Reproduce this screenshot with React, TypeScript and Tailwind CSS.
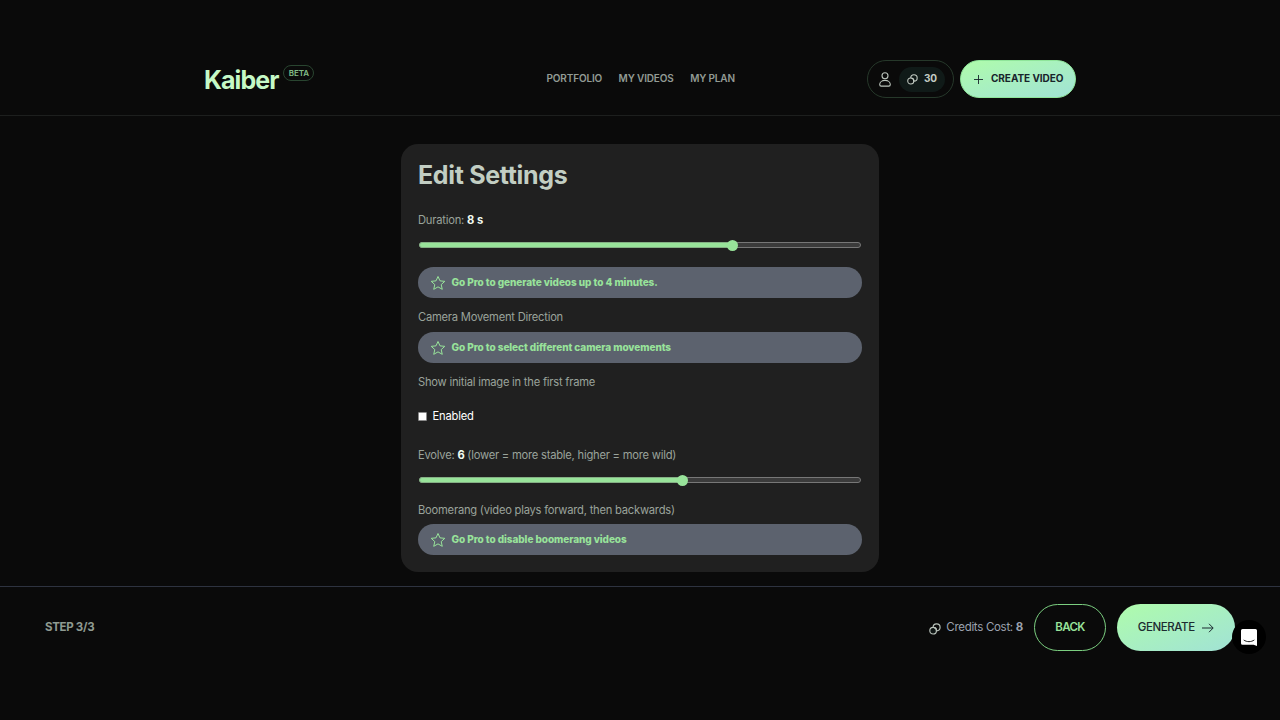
import React from "react";

function CoinsIcon({ className }: { className: string }) {
  return (
    <svg viewBox="0 0 12 12" fill="none" stroke="currentColor" strokeWidth="1.15" className={className}>
      <circle cx="7.6" cy="4.3" r="3.5" />
      <circle cx="4.1" cy="7.7" r="3.3" className="fill-[#0e1413]" />
      <path d="M5 4.6c1.7.2 2.6 1.2 2.4 3" />
    </svg>
  );
}

function Slider({ value }: { value: number }) {
  return (
    <div className="relative mx-px h-[6px] rounded-full border border-[#777] bg-[#3b3b3b]">
      <div className="absolute -top-px -left-px h-[6px] rounded-full border border-[#84b084] bg-[#98e39a]" style={{ width: value }} />
      <div className="absolute -top-[3.5px] size-[11px] rounded-full bg-[#98e39a]" style={{ left: value - 7 }} />
    </div>
  );
}

function ProBanner({ children, className }: { children: React.ReactNode; className: string }) {
  return (
    <div className={"flex h-[31px] items-center rounded-full bg-[#5c626e] pl-[12px] text-[#98e39a] " + className}>
      <svg viewBox="0 0 24 24" fill="none" stroke="currentColor" strokeWidth="1.5" strokeLinejoin="round" className="mt-px mr-[5.5px] size-[16px]">
        <path d="M12 2.2l3 6.6 7.2.7-5.4 4.9 1.6 7.1-6.4-3.7-6.4 3.7 1.6-7.1-5.4-4.9 7.2-.7z" />
      </svg>
      <span className="text-[10px] leading-[15px] font-extrabold tracking-[-0.06px]">{children}</span>
    </div>
  );
}

function Label({ children, className }: { children: React.ReactNode; className: string }) {
  return <div className={"h-[16px] text-[11.2px] leading-[16px] tracking-[-0.23px] whitespace-nowrap text-[#9aa39b] " + className}>{children}</div>;
}

export default function App() {
  return (
    <div className="relative flex h-[720px] w-[1280px] flex-col overflow-hidden bg-[#0a0a0a] font-['Inter',sans-serif]">
      <header className="h-[116px] border-b border-[#1d1f1e] pt-[42px]">
        <div className="mx-auto grid h-[74px] w-[872px] grid-cols-[342px_1fr_auto] items-center">
          <div className="flex items-center">
            <span className="pt-[2px] text-[25px] leading-[32px] font-bold tracking-[-0.95px] text-[#c5f9c6]">Kaiber</span>
            <span className="mb-[12px] ml-[5px] flex h-[16px] w-[31px] items-center justify-center rounded-full border border-[#294530] text-[8px] font-semibold text-[#83bd87]">BETA</span>
          </div>
          <nav className="flex gap-[16.5px] pb-px pl-[0.5px] text-[10px] font-semibold tracking-[-0.15px] text-[#929b94]">
            <span>PORTFOLIO</span>
            <span>MY VIDEOS</span>
            <span>MY PLAN</span>
          </nav>
          <div className="flex gap-[6px]">
            <div className="flex h-[38px] w-[87px] items-center rounded-full border border-[#26382a] pl-[11px]">
              <svg viewBox="0 0 12 15" fill="none" stroke="#bbc4bc" strokeWidth="1.1" className="mr-[8px] h-[15px] w-[12px]">
                <circle cx="6" cy="3.8" r="3" />
                <path d="M6 8.4c-3 0-5.3 1.8-5.3 4 0 1 .6 1.7 1.5 1.7h7.6c.9 0 1.5-.7 1.5-1.7 0-2.2-2.3-4-5.3-4z" />
              </svg>
              <div className="flex h-[25px] w-[46px] items-center rounded-full bg-[#101a18] pl-[8px] text-[#c3ccc4]">
                <CoinsIcon className="mr-[6px] size-[11px]" />
                <span className="pb-px text-[10px] font-bold tracking-[-0.3px]">30</span>
              </div>
            </div>
            <button className="flex h-[38px] w-[116px] items-center rounded-full border border-[#8fe59a] bg-gradient-to-br from-[#affcaa] to-[#a1e2d5] pl-[13px] text-[#18242b]">
              <svg viewBox="0 0 10 10" stroke="currentColor" strokeWidth="1" className="mr-[8px] size-[9px]">
                <path d="M5 0v10M0 5h10" />
              </svg>
              <span className="pb-px text-[10px] font-bold tracking-[-0.05px] whitespace-nowrap">CREATE VIDEO</span>
            </button>
          </div>
        </div>
      </header>

      <main className="h-[470px] pt-[28px]">
        <section className="mx-auto h-[428px] w-[478px] rounded-[17px] bg-[#202020] px-[17px] pt-[15px]">
          <h1 className="h-[32px] text-[25px] leading-[33px] font-bold tracking-[-0.33px] text-[#c2cec3]">Edit Settings</h1>
          <Label className="mt-[21px]">Duration: <b className="tracking-normal text-[#f1fbf1]">8 s</b></Label>
          <div className="mt-[14px]"><Slider value={314} /></div>
          <ProBanner className="mt-[19px]">Go Pro to generate videos up to 4 minutes.</ProBanner>
          <Label className="mt-[11px]">Camera Movement Direction</Label>
          <ProBanner className="mt-[6.5px]">Go Pro to select different camera movements</ProBanner>
          <Label className="mt-[11.5px]">Show initial image in the first frame</Label>
          <label className="mt-[18px] flex h-[16px] items-center text-[11.2px] leading-[16px] tracking-[-0.2px] text-white">
            <span className="mr-[5.5px] size-[9px] rounded-[1px] border border-[#8b8b8b] bg-white" />
            Enabled
          </label>
          <Label className="mt-[23px]">Evolve: <b className="text-[#f1fbf1]">6</b> (lower = more stable, higher = more wild)</Label>
          <div className="mt-[14px]"><Slider value={264} /></div>
          <Label className="mt-[19px]">Boomerang (video plays forward, then backwards)</Label>
          <ProBanner className="mt-[6px]">Go Pro to disable boomerang videos</ProBanner>
        </section>
      </main>

      <footer className="flex h-[134px] items-start justify-between border-t border-[#2e3340] pt-[17px] pr-[45px] pl-[45px]">
        <span className="text-[11.5px] leading-[47px] font-bold tracking-[-0.3px] text-[#8f9a91]">STEP 3/3</span>
        <div className="flex h-[47px] items-center">
          <CoinsIcon className="mr-[5px] mt-[2px] size-[12px] text-[#b9c2ba]" />
          <span className="mr-[11px] text-[11.5px] leading-[47px] tracking-[-0.3px] text-[#9ca3af]">Credits Cost: <b>8</b></span>
          <button className="mr-[11px] h-[47px] w-[72px] rounded-full border border-[#7bcf80] text-[11.5px] font-semibold tracking-[-0.6px] text-[#98e39a]">BACK</button>
          <button className="flex h-[47px] w-[118px] items-center justify-center rounded-full bg-gradient-to-br from-[#affcaa] to-[#a1e2d5] text-[#1d2b31]">
            <span className="text-[11.5px] leading-[47px] font-medium tracking-[-0.4px]">GENERATE</span>
            <svg viewBox="0 0 12 10" fill="none" stroke="currentColor" strokeWidth="1" className="mt-px ml-[7.5px] h-[10px] w-[12px]">
              <path d="M0 5h11M7 .8L11.2 5 7 9.2" />
            </svg>
          </button>
        </div>
      </footer>

      <div className="absolute top-[620px] left-[1232px] flex size-[34px] items-center justify-center rounded-full bg-black">
        <svg viewBox="0 0 16 17" className="h-[17px] w-[16px]">
          <path d="M1.5 0h13A1.5 1.5 0 0116 1.5V17l-3.4-1.3H1.5A1.5 1.5 0 010 14.2V1.5A1.5 1.5 0 011.5 0z" fill="#fff" />
          <path d="M3 11.2c2.8 2 7.2 2 10 0" fill="none" stroke="#000" strokeWidth=".9" strokeLinecap="round" />
        </svg>
      </div>
    </div>
  );
}
